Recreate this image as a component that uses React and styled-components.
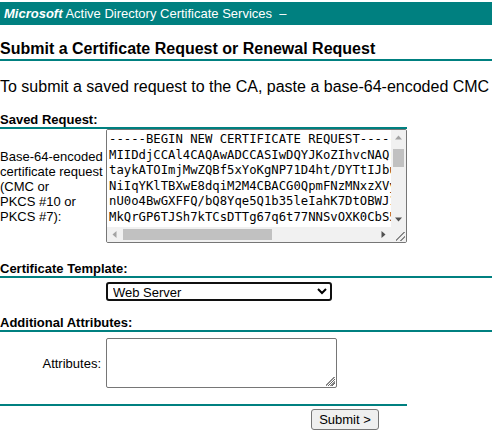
import React from "react";
import styled, { createGlobalStyle } from "styled-components";

const TEAL = "#008080";

const GlobalStyle = createGlobalStyle`
  html, body {
    margin: 0;
    padding: 0;
    overflow: hidden;
    background: #ffffff;
  }
  body {
    font-family: "Liberation Sans", Arial, sans-serif;
    color: #000;
  }
`;

const Page = styled.div`
  width: 492px;
  display: flex;
  flex-direction: column;
  align-items: flex-start;
`;

const HeaderBar = styled.div`
  margin-top: 2px;
  width: 100%;
  height: 23px;
  box-sizing: border-box;
  padding-left: 4px;
  display: flex;
  align-items: center;
  background: ${TEAL};
  color: #fff;
  font-size: 13px;
  white-space: pre;
`;

const Brand = styled.span`
  font-weight: bold;
  font-style: italic;
`;

const Title = styled.div`
  margin-top: 15px;
  width: 100%;
  font-size: 16px;
  font-weight: bold;
  line-height: 18px;
  padding-bottom: 1px;
  border-bottom: 2px solid ${TEAL};
`;

const Intro = styled.div`
  margin-top: 17px;
  font-size: 16px;
  line-height: 18px;
  white-space: nowrap;
`;

const SectionHeading = styled.div`
  margin-top: ${(p) => p.$gap}px;
  width: ${(p) => p.$width}px;
  font-size: 13px;
  font-weight: bold;
  line-height: 15px;
  border-bottom: 2px solid ${TEAL};
`;

const FieldRow = styled.div`
  margin-top: ${(p) => p.$gap || 0}px;
  display: grid;
  grid-template-columns: 104px auto;
  column-gap: 2px;
  align-items: center;
`;

const FieldLabel = styled.div`
  font-size: 13px;
  line-height: 15px;
  white-space: nowrap;
  text-align: ${(p) => (p.$right ? "right" : "left")};
  padding-right: ${(p) => (p.$right ? 3 : 0)}px;
`;

const gripBackground = `
  background-image: linear-gradient(
    135deg,
    transparent 0 44%,
    #8a8a8a 44% 53%,
    transparent 53% 72%,
    #8a8a8a 72% 81%,
    transparent 81%
  );
  background-repeat: no-repeat;
`;

const ScrollFrame = styled.div`
  width: 301px;
  height: 114px;
  box-sizing: border-box;
  border: 1px solid #767676;
  border-radius: 2px;
  display: grid;
  grid-template-columns: minmax(0, 1fr) 15px;
  grid-template-rows: minmax(0, 1fr) 15px;
  overflow: hidden;
  background: #fff;
`;

const FramedText = styled.textarea`
  grid-area: 1 / 1;
  min-width: 0;
  min-height: 0;
  margin: 0;
  padding: 2px;
  border: 0;
  resize: none;
  overflow: hidden;
  outline: none;
  background: #fff;
  color: #000;
  font-family: "DejaVu Sans Mono", "Liberation Mono", monospace;
  font-size: 12.25px;
  line-height: 15.6px;
  white-space: pre;
`;

const ScrollBar = styled.div`
  grid-area: ${(p) => (p.$vertical ? "1 / 2" : "2 / 1")};
  display: flex;
  flex-direction: ${(p) => (p.$vertical ? "column" : "row")};
  background: #f1f1f1;
`;

const ArrowButton = styled.div`
  flex: 0 0 15px;
  width: 15px;
  height: 15px;
  display: flex;
  align-items: center;
  justify-content: center;
`;

const Track = styled.div`
  flex: 1;
  display: flex;
  flex-direction: ${(p) => (p.$vertical ? "column" : "row")};
  padding: ${(p) => (p.$vertical ? "4px 2px 0" : "2px 0 2px 1px")};
`;

const Thumb = styled.div`
  background: #c1c1c1;
  flex: 0 0 auto;
`;

const Corner = styled.div`
  grid-area: 2 / 2;
  background-color: #f1f1f1;
  ${gripBackground}
  background-size: 9px 9px;
  background-position: right 1px bottom 1px;
`;

const TemplateSelect = styled.select`
  width: 226px;
  height: 19px;
  box-sizing: border-box;
  margin: 0;
  padding: 0 0 0 1px;
  border: 2px solid #101010;
  border-radius: 3px;
  background: #fff;
  color: #000;
  font-family: "Liberation Sans", Arial, sans-serif;
  font-size: 13px;
`;

const AttributesBox = styled.textarea`
  width: 231px;
  height: 50px;
  box-sizing: border-box;
  margin: 0;
  padding: 2px;
  border: 1px solid #767676;
  border-radius: 2px;
  font-family: "DejaVu Sans Mono", monospace;
  font-size: 12.25px;
  background-color: #fff;
  ${gripBackground}
  background-size: 9px 9px;
  background-position: right 1px bottom 1px;
  outline: none;
  resize: both;
`;

const Divider = styled.div`
  margin-top: 16px;
  width: 407px;
  height: 2px;
  background: ${TEAL};
`;

const SubmitButton = styled.button`
  margin-top: 3px;
  margin-left: 311px;
  width: 68px;
  height: 21px;
  box-sizing: border-box;
  padding: 0;
  border: 1px solid #767676;
  border-radius: 3px;
  background: #efefef;
  color: #000;
  font-family: "Liberation Sans", Arial, sans-serif;
  font-size: 13px;
  line-height: 15px;
`;

const ARROWS = {
  up: "M4 9.5 L7.5 5.5 L11 9.5 Z",
  down: "M4 5.5 L7.5 9.5 L11 5.5 Z",
  left: "M9.5 4 L5.5 7.5 L9.5 11 Z",
  right: "M5.5 4 L9.5 7.5 L5.5 11 Z",
};

function Arrow({ dir, color }) {
  return (
    <ArrowButton>
      <svg width="15" height="15" viewBox="0 0 15 15">
        <path d={ARROWS[dir]} fill={color} />
      </svg>
    </ArrowButton>
  );
}

function ScrollingTextArea({ value }) {
  return (
    <ScrollFrame>
      <FramedText wrap="off" spellCheck={false} defaultValue={value} />
      <ScrollBar $vertical>
        <Arrow dir="up" color="#a3a3a3" />
        <Track $vertical>
          <Thumb style={{ height: 18 }} />
        </Track>
        <Arrow dir="down" color="#505050" />
      </ScrollBar>
      <ScrollBar>
        <Arrow dir="left" color="#a3a3a3" />
        <Track>
          <Thumb style={{ width: 149 }} />
        </Track>
        <Arrow dir="right" color="#505050" />
      </ScrollBar>
      <Corner />
    </ScrollFrame>
  );
}

const B64 = "ABCDEFGHIJKLMNOPQRSTUVWXYZabcdefghijklmnopqrstuvwxyz0123456789+/";
function tail(seed, n) {
  let s = seed;
  let out = "";
  for (let i = 0; i < n; i++) {
    s = (s * 1103515245 + 12345) % 2147483648;
    out += B64[Math.floor(s / 65536) % 64];
  }
  return out;
}

const heads = [
  "MIIDdjCCAl4CAQAwADCCASIwDQYJKoZIhvcNAQ",
  "taykATOImjMwZQBf5xYoKgNP71D4ht/DYTtIJb",
  "NiIqYKlTBXwE8dqiM2M4CBACG0QpmFNzMNxzXV",
  "nU0o4BwGXFFQ/bQ8Yqe5Q1b35leIahK7DtOBWJ",
  "MkQrGP6TJSh7kTCsDTTg67q6t77NNSvOXK0CbS",
];

const bodyLines = heads.map((h, i) => h + tail(17 + i * 31, 64 - h.length));
for (let i = 0; i < 15; i++) bodyLines.push(tail(401 + i * 97, 64));
bodyLines.push(tail(9001, 28) + "==");

const REQUEST = [
  "-----BEGIN NEW CERTIFICATE REQUEST-----",
  ...bodyLines,
  "-----END NEW CERTIFICATE REQUEST-----",
].join("\n");

export default function App() {
  return (
    <>
      <GlobalStyle />
      <Page>
        <HeaderBar>
          <Brand>Microsoft</Brand>
          {" Active Directory Certificate Services \u00a0\u2013"}
        </HeaderBar>
        <Title>Submit a Certificate Request or Renewal Request</Title>
        <Intro>To submit a saved request to the CA, paste a base-64-encoded CMC</Intro>

        <SectionHeading $gap={16} $width={407}>Saved Request:</SectionHeading>
        <FieldRow>
          <FieldLabel>
            Base-64-encoded
            <br />
            certificate request
            <br />
            (CMC or
            <br />
            PKCS #10 or
            <br />
            PKCS #7):
          </FieldLabel>
          <ScrollingTextArea value={REQUEST} />
        </FieldRow>

        <SectionHeading $gap={18} $width={492}>Certificate Template:</SectionHeading>
        <FieldRow $gap={4}>
          <FieldLabel />
          <TemplateSelect defaultValue="WebServer">
            <option value="WebServer">Web Server</option>
          </TemplateSelect>
        </FieldRow>

        <SectionHeading $gap={14} $width={492}>Additional Attributes:</SectionHeading>
        <FieldRow $gap={6}>
          <FieldLabel $right>Attributes:</FieldLabel>
          <AttributesBox spellCheck={false} />
        </FieldRow>

        <Divider />
        <SubmitButton type="button">Submit &gt;</SubmitButton>
      </Page>
    </>
  );
}
